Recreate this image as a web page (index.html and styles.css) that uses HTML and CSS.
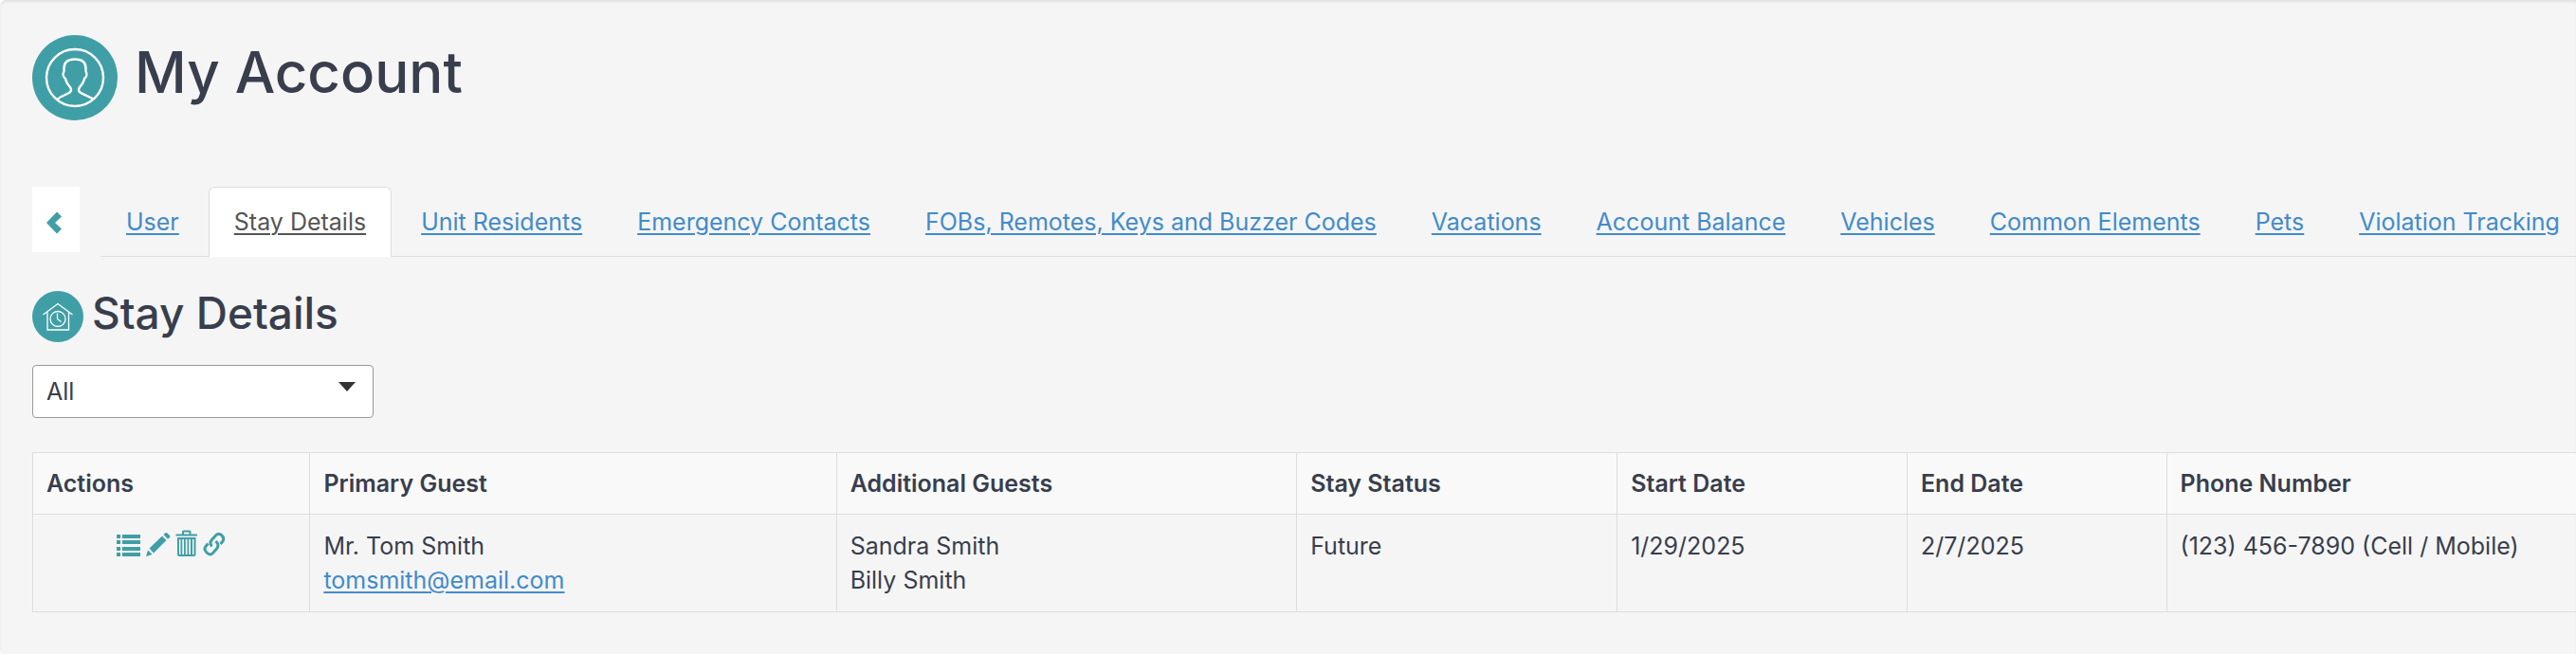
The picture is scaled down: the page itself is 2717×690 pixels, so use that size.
FILE: index.html
```html
<!DOCTYPE html>
<html lang="en">
<head>
    <meta charset="UTF-8">
    <title>My Account</title>
    <link rel="stylesheet" href="styles.css">
</head>
<body>
<main class="well">
    <header class="page-header">
        <svg class="page-icon" viewBox="0 0 90 90" aria-hidden="true">
            <circle class="icon-disc" cx="45" cy="45" r="45"/>
            <g fill="none" stroke="#fff" stroke-width="2.4" stroke-linejoin="round">
                <circle cx="45" cy="45" r="30"/>
                <path d="M27 67.5C29 65 36 63 39.500 60.500C41.500 59 41 56.500 40 55C37.500 52 35.500 49 35 46C33 44.500 32 41.500 33 39.500C34 38 33.500 37 33.500 35C33.500 28.500 38 25.500 45 25.500S56.500 28.500 56.500 35C56.500 37 56 38 57 39.500C58 41.500 57 44.500 55 46C54.500 49 52.500 52 50 55C49 56.500 48.500 59 50.500 60.500C54 63 61 65 64 67.500"/>
            </g>
        </svg>
        <h1>My Account</h1>
    </header>

    <div class="tab-bar">
        <button class="back" type="button" aria-label="Back">
            <svg viewBox="0 0 16 24" aria-hidden="true"><path d="M11 0.500L0 12L11 23.500L16 18.500L9 12L16 5.500Z"/></svg>
        </button>
        <nav class="nav-tabs">
            <a href="#user">User</a>
            <a href="#stay" class="active">Stay Details</a>
            <a href="#residents">Unit Residents</a>
            <a href="#contacts">Emergency Contacts</a>
            <a href="#keys">FOBs, Remotes, Keys and Buzzer Codes</a>
            <a href="#vacations">Vacations</a>
            <a href="#balance">Account Balance</a>
            <a href="#vehicles">Vehicles</a>
            <a href="#elements">Common Elements</a>
            <a href="#pets">Pets</a>
            <a href="#violations">Violation Tracking</a>
        </nav>
    </div>

    <section id="stay">
        <header class="section-header">
            <svg class="section-icon" viewBox="0 0 54 54" aria-hidden="true">
                <circle class="icon-disc" cx="27" cy="27" r="27"/>
                <g fill="none" stroke="#fff" stroke-width="1.300">
                    <path d="M11.500 25L27 13.500L42.500 25M16 22.500V41H38.500V22.500"/>
                    <circle cx="27" cy="29.500" r="8"/>
                    <path d="M26.500 23.500V29.500L30.500 32.500"/>
                </g>
            </svg>
            <h2>Stay Details</h2>
        </header>

        <div class="filter">
            <select aria-label="Stay status">
                <option>All</option>
                <option>Future</option>
                <option>Past</option>
            </select>
            <svg viewBox="0 0 18 10" aria-hidden="true"><path d="M0 0H18L9 10Z"/></svg>
        </div>

        <table class="stays">
            <colgroup>
                <col class="col-actions">
                <col class="col-primary">
                <col class="col-additional">
                <col class="col-status">
                <col class="col-start">
                <col class="col-end">
                <col>
            </colgroup>
            <thead>
                <tr>
                    <th>Actions</th>
                    <th>Primary Guest</th>
                    <th>Additional Guests</th>
                    <th>Stay Status</th>
                    <th>Start Date</th>
                    <th>End Date</th>
                    <th>Phone Number</th>
                </tr>
            </thead>
            <tbody>
                <tr>
                    <td>
                        <div class="actions">
                            <button type="button" aria-label="Details">
                                <svg width="26" height="28" viewBox="0 0 26 28"><path d="M0 5h4v4H0zM6 5h19v4H6zM0 11h4v4H0zM6 11h19v4H6zM0 18h4v4H0zM6 18h19v4H6zM0 24h4v4H0zM6 24h19v4H6z"/></svg>
                            </button>
                            <button type="button" aria-label="Edit">
                                <svg width="26" height="28" viewBox="0 0 26 28"><path d="M0 28L2 21.500L6.500 26ZM3.500 19.500L17 6.500L21.500 11L8 24.500ZM18.500 5L20.500 3.200Q21.500 2.500 22.500 3.500L25 6Q26 7 25 8L23 9.700Z"/></svg>
                            </button>
                            <button type="button" aria-label="Delete">
                                <svg width="24" height="28" viewBox="0 0 24 28"><path fill-rule="evenodd" d="M0.500 4.500H7V2Q7 0.500 8.500 0.500H15Q16.500 0.500 16.500 2V4.500H23V6.500H0.500ZM9 4.500H14.500V2.500H9ZM2 8H21.500V26Q21.500 28 19.500 28H4Q2 28 2 26ZM4 10V26H5.500V10ZM7.300 10V26H9V10ZM10.800 10V26H12.500V10ZM14.300 10V26H16V10ZM18 10V26H19.500V10Z"/></svg>
                            </button>
                            <button type="button" aria-label="Copy link">
                                <svg width="24" height="28" viewBox="0 0 24 28"><g fill="none" stroke="currentColor" stroke-width="3" stroke-linejoin="round"><path d="M9.500 17.500Q6.500 14 9 11L14 5.500Q16.500 3 19.500 5.500Q23 8.500 21 12L18.500 15"/><path d="M5.500 14.500L3 17.500Q0.500 20.500 4 24Q7.500 27.500 10.500 24.500L14.500 20Q17.500 16.500 14.500 13L13.500 12"/></g></svg>
                            </button>
                        </div>
                    </td>
                    <td>Mr. Tom Smith<br><a href="mailto:tomsmith@email.com">tomsmith@email.com</a></td>
                    <td>Sandra Smith<br>Billy Smith</td>
                    <td>Future</td>
                    <td>1/29/2025</td>
                    <td>2/7/2025</td>
                    <td>(123) 456-7890 (Cell / Mobile)</td>
                </tr>
            </tbody>
        </table>
    </section>
</main>
</body>
</html>
```
FILE: styles.css
```css
* {
    box-sizing: border-box;
}
body {
    margin: 0;
    background-color: white;
    color: #383e4d;
    font-family: Inter, "Liberation Sans", sans-serif;
    font-size: 25px;
    line-height: 36px;
    overflow-x: hidden;
}
a {
    color: #428bca;
    text-decoration-thickness: 2px;
    text-underline-offset: 3px;
}
button {
    border: 0;
    padding: 0;
    background: none;
    color: #409fa6;
    cursor: pointer;
}
svg {
    display: block;
    fill: currentColor;
}
h1, h2 {
    margin: 0;
    font-weight: 500;
}
h1 {
    font-size: 60px;
    line-height: 78px;
}
h2 {
    font-size: 46px;
    line-height: 46px;
}
.well {
    min-height: 100vh;
    padding: 36px 0 44px 33px;
    background-color: #f5f5f5;
    border: solid 1px #f0f0f0;
    border-top-color: #e3e3e3;
    border-right: 0;
    border-radius: 6px 0 0 6px;
    box-shadow: inset 0 2px 2px rgba(0, 0, 0, 0.05);
}
.icon-disc {
    fill: #409fa6;
}
.page-header {
    display: flex;
    gap: 18px;
}
.page-icon {
    width: 90px;
    height: 90px;
}
.tab-bar {
    display: flex;
    align-items: flex-start;
    gap: 22px;
    margin-top: 70px;
}
.back {
    display: flex;
    flex: none;
    align-items: center;
    justify-content: center;
    width: 50px;
    height: 69px;
    padding: 6px 4px 0 0;
    background-color: white;
}
.back svg {
    width: 16px;
    height: 24px;
}
.nav-tabs {
    display: flex;
    flex: 1;
    gap: 4px;
    min-width: 0;
    height: 74px;
    border-bottom: solid 1px #ddd;
}
.nav-tabs a {
    flex: none;
    height: 74px;
    padding: 18px 26px;
    border: solid 1px transparent;
    border-bottom: 0;
    border-radius: 6px 6px 0 0;
    white-space: nowrap;
}
.nav-tabs .active {
    background-color: white;
    border-color: #ddd;
    color: #555;
}
.section-header {
    display: flex;
    gap: 9px;
    margin-top: 36px;
}
.section-icon {
    width: 54px;
    height: 54px;
}
.filter {
    position: relative;
    width: 360px;
    margin-top: 24px;
}
.filter select {
    display: block;
    appearance: none;
    width: 100%;
    height: 56px;
    padding: 0 14px;
    border: solid 1px #999;
    border-radius: 4px;
    background-color: white;
    color: inherit;
    font: inherit;
}
/* arrow drawn over the select */
.filter svg {
    position: absolute;
    top: 18px;
    right: 19px;
    width: 18px;
    height: 10px;
    color: #333;
    pointer-events: none;
}
.stays {
    width: 100%;
    margin-top: 36px;
    table-layout: fixed;
    border-collapse: collapse;
}
.stays th, .stays td {
    padding: 15px 14px;
    border: solid 1px #ddd;
    border-right: 0;
    text-align: left;
    vertical-align: top;
}
.stays th {
    padding: 14px;
    background-color: #f9f9f9;
    font-weight: 600;
}
.col-actions {
    width: 10.9%;
}
.col-primary {
    width: 20.7%;
}
.col-additional {
    width: 18.1%;
}
.col-status {
    width: 12.6%;
}
.col-start {
    width: 11.4%;
}
.col-end {
    width: 10.2%;
}
.actions {
    display: flex;
    justify-content: center;
    gap: 5px;
    padding-top: 1px;
}
```
